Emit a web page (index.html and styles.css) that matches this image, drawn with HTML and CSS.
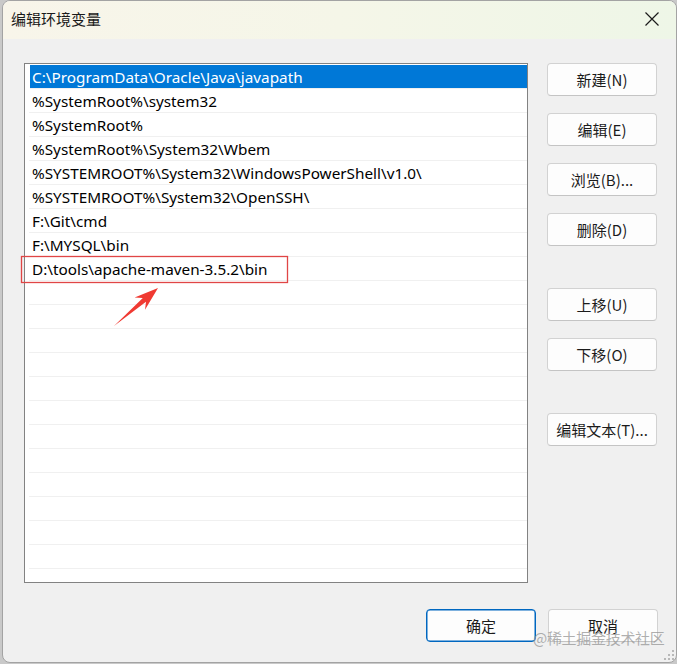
FILE: index.html
```html
<!doctype html>
<html>
	<head>
		<meta charset="utf-8" />
		<title>编辑环境变量</title>
		<link rel="stylesheet" href="styles.css">
	</head>
	<body>
		<div class="window">
			<div class="titlebar">
				<span class="title">编辑环境变量</span>
				<span class="close">
					<svg width="16" height="16" viewBox="0 0 16 16"><path d="M1.5 1.5 L14.5 14.5 M14.5 1.5 L1.5 14.5" stroke="#1b1b1b" stroke-width="1.2" fill="none"/></svg>
				</span>
			</div>
			<div class="content">
				<div class="list">
					<div class="row selected">C:\ProgramData\Oracle\Java\javapath</div>
					<div class="row">%SystemRoot%\system32</div>
					<div class="row">%SystemRoot%</div>
					<div class="row">%SystemRoot%\System32\Wbem</div>
					<div class="row">%SYSTEMROOT%\System32\WindowsPowerShell\v1.0\</div>
					<div class="row">%SYSTEMROOT%\System32\OpenSSH\</div>
					<div class="row">F:\Git\cmd</div>
					<div class="row">F:\MYSQL\bin</div>
					<div class="row">D:\tools\apache-maven-3.5.2\bin</div>
					<div class="row"></div>
					<div class="row"></div>
					<div class="row"></div>
					<div class="row"></div>
					<div class="row"></div>
					<div class="row"></div>
					<div class="row"></div>
					<div class="row"></div>
					<div class="row"></div>
					<div class="row"></div>
					<div class="row"></div>
					<div class="row"></div>
				</div>
				<div class="side">
					<div class="btn">新建(N)</div>
					<div class="btn">编辑(E)</div>
					<div class="btn">浏览(B)...</div>
					<div class="btn">删除(D)</div>
					<div class="btn group">上移(U)</div>
					<div class="btn">下移(O)</div>
					<div class="btn group">编辑文本(T)...</div>
				</div>
			</div>
			<div class="footer">
				<div class="btn focused">确定</div>
				<div class="btn">取消</div>
			</div>
			<svg class="grip" width="14" height="14" viewBox="0 0 14 14">
				<rect x="10" y="2" width="2" height="2" fill="#b8b8b8"/>
				<rect x="6" y="6" width="2" height="2" fill="#b8b8b8"/>
				<rect x="10" y="6" width="2" height="2" fill="#b8b8b8"/>
				<rect x="2" y="10" width="2" height="2" fill="#b8b8b8"/>
				<rect x="6" y="10" width="2" height="2" fill="#b8b8b8"/>
				<rect x="10" y="10" width="2" height="2" fill="#b8b8b8"/>
			</svg>
		</div>
		<!-- annotation drawn on top of the screenshot -->
		<svg class="mark" width="677" height="664" viewBox="0 0 677 664">
			<rect x="21.5" y="256.5" width="266" height="26" fill="none" stroke="#e04646" stroke-width="1.3"/>
			<polygon points="114,326 146,301.7 145,309.8 158,288 134.6,297.6 142.8,297.9" fill="#f03a32"/>
		</svg>
		<div class="watermark">@稀土掘金技术社区</div>
	</body>
</html>
```

FILE: styles.css
```css
body {
	margin : 0;
	background-color : #c9c9c9;
	font-family : "Noto Sans", "Noto Sans CJK SC", sans-serif;
	font-size : 15px;
	color : #1a1a1a;
	width : 677px;
	height : 664px;
	overflow : hidden;
	position : relative;
}
.window {
	position : relative;
	margin-left : 2px;
	width : 675px;
	height : 663px;
	box-sizing : border-box;
	border : 1px solid #a3a3a3;
	border-radius : 8px;
	overflow : hidden;
	background-color : #f0f0f0;
}
.titlebar {
	height : 38px;
	box-sizing : border-box;
	padding-bottom : 4px;
	display : flex;
	align-items : center;
	justify-content : space-between;
	padding-left : 8px;
	background : linear-gradient(90deg, #f8f5ea 0%, #f5f6e8 50%, #eef6e7 100%);
}
.title {
	font-family : "Noto Sans CJK SC", sans-serif;
	font-size : 15px;
	color : #1a1a1a;
}
.close {
	width : 44px;
	display : flex;
	justify-content : center;
	margin-right : 2px;
	padding-top : 2px;
}
.close svg {
	display : block;
}
.content {
	display : flex;
	padding : 24px 0 0 21px;
}
.list {
	width : 504px;
	height : 520px;
	box-sizing : border-box;
	border : 1px solid #828282;
	background-color : #ffffff;
	padding : 1px 0 0 4px;
	overflow : hidden;
}
.row {
	height : 24px;
	box-sizing : border-box;
	border-bottom : 1px solid #f0f0f0;
	padding-left : 3px;
	line-height : 25px;
	font-size : 15.3px;
	white-space : nowrap;
	color : #000000;
}
.row.selected {
	background-color : #0078d7;
	color : #ffffff;
	margin-left : 1px;
	padding-left : 2px;
}
.side {
	display : flex;
	flex-direction : column;
	margin-left : 19px;
	padding-top : 0;
	gap : 17px;
}
.btn {
	width : 110px;
	height : 33px;
	box-sizing : border-box;
	border : 1px solid #d2d2d2;
	border-bottom-color : #c4c4c4;
	border-radius : 4px;
	background-color : #fdfdfd;
	display : flex;
	align-items : center;
	justify-content : center;
	padding-bottom : 1px;
	font-family : "Noto Sans CJK SC", sans-serif;
	font-size : 15px;
	color : #1b1b1b;
}
.side .group {
	margin-top : 25px;
}
.footer {
	display : flex;
	justify-content : flex-end;
	gap : 12px;
	padding : 26px 18px 0 0;
}
.btn.focused {
	border : 1px solid #0067c0;
	box-shadow : inset 0 0 0 0.5px #0067c0;
}
.grip {
	position : absolute;
	right : 0;
	bottom : 0;
}
.mark {
	position : absolute;
	left : 0;
	top : 0;
}
.watermark {
	position : absolute;
	left : 533px;
	top : 627px;
	font-family : "Noto Sans CJK SC", sans-serif;
	font-size : 15px;
	color : rgba(150, 150, 150, 0.75);
	letter-spacing : -0.3px;
}
```
